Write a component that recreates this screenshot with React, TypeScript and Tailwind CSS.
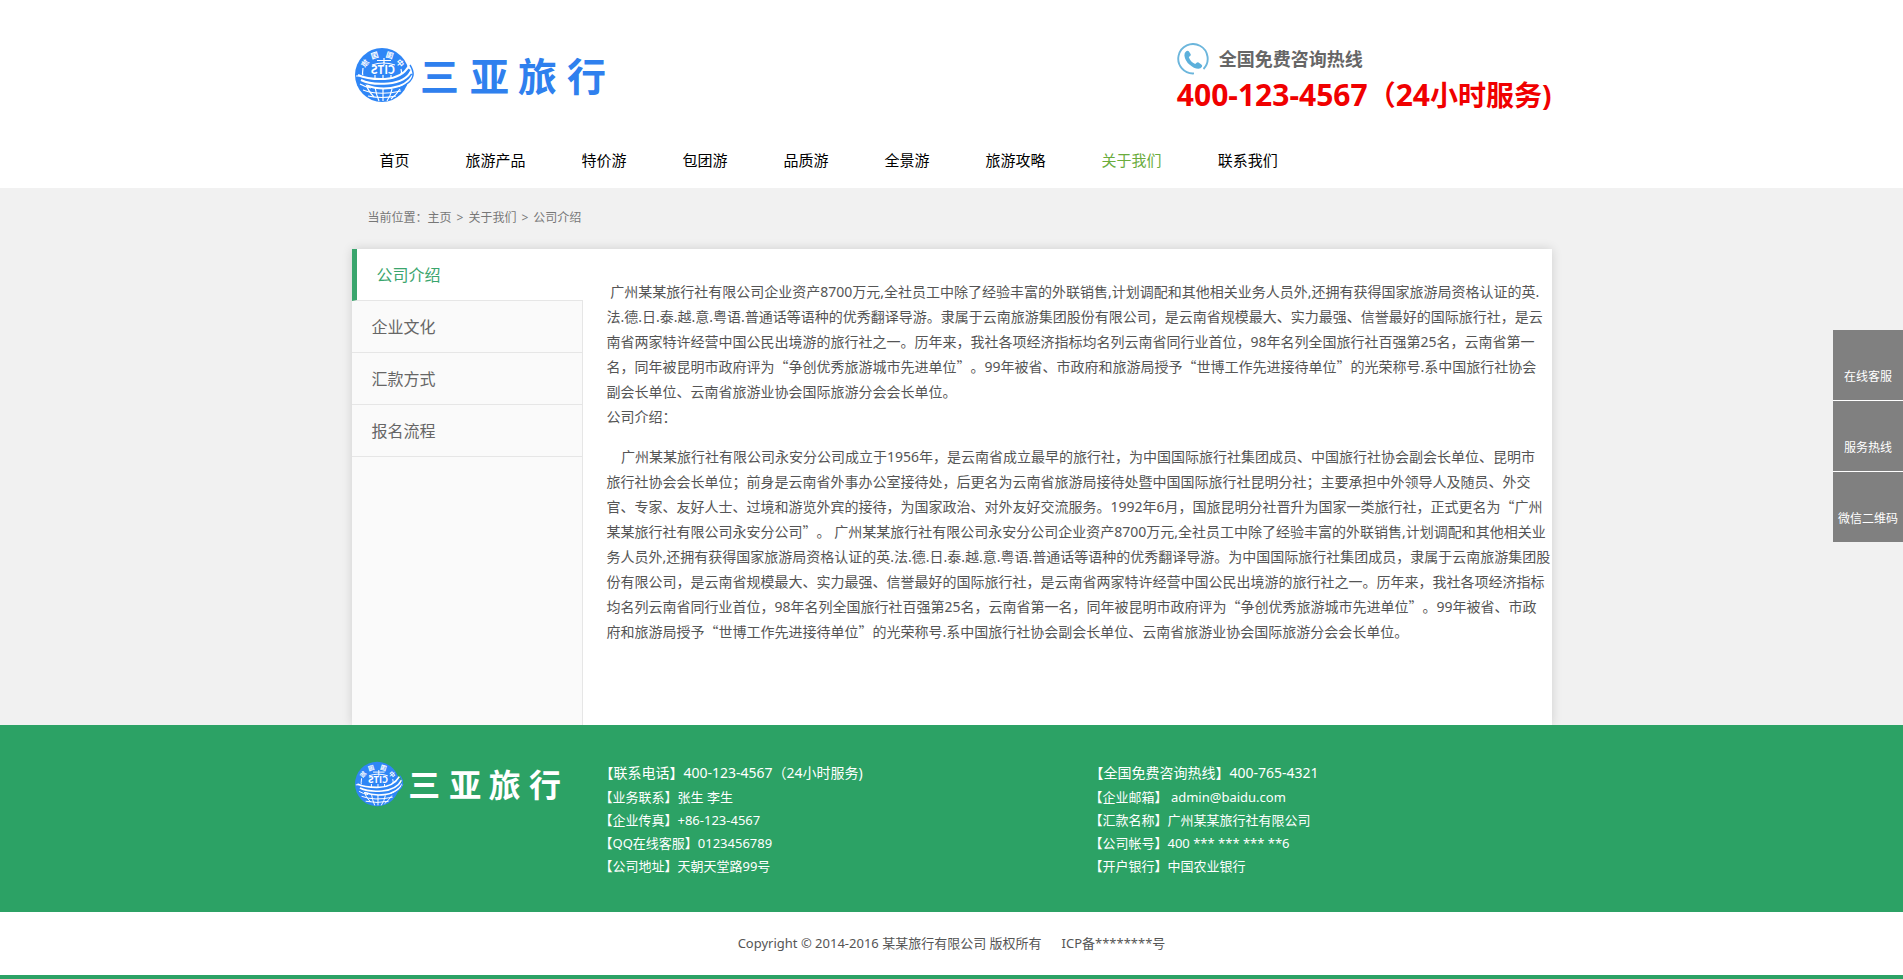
import React from "react";

const navItems = ["首页", "旅游产品", "特价游", "包团游", "品质游", "全景游", "旅游攻略", "关于我们", "联系我们"];
const sideItems = ["公司介绍", "企业文化", "汇款方式", "报名流程"];
const floatItems = ["在线客服", "服务热线", "微信二维码"];

const contactLeft = [
  "【联系电话】400-123-4567（24小时服务)",
  "【业务联系】张生 李生",
  "【企业传真】+86-123-4567",
  "【QQ在线客服】0123456789",
  "【公司地址】天朝天堂路99号",
];
const contactRight = [
  "【全国免费咨询热线】400-765-4321",
  "【企业邮箱】 admin@baidu.com",
  "【汇款名称】广州某某旅行社有限公司",
  "【公司帐号】400 *** *** *** **6",
  "【开户银行】中国农业银行",
];

const intro = [
  "\u00a0广州某某旅行社有限公司企业资产8700万元,全社员工中除了经验丰富的外联销售,计划调配和其他相关业务人员外,还拥有获得国家旅游局资格认证的英.",
  "法.德.日.泰.越.意.粤语.普通话等语种的优秀翻译导游。隶属于云南旅游集团股份有限公司，是云南省规模最大、实力最强、信誉最好的国际旅行社，是云",
  "南省两家特许经营中国公民出境游的旅行社之一。历年来，我社各项经济指标均名列云南省同行业首位，98年名列全国旅行社百强第25名，云南省第一",
  "名，同年被昆明市政府评为“争创优秀旅游城市先进单位”。99年被省、市政府和旅游局授予“世博工作先进接待单位”的光荣称号.系中国旅行社协会",
  "副会长单位、云南省旅游业协会国际旅游分会会长单位。",
  "公司介绍：",
];
const history = [
  "\u00a0\u00a0\u00a0\u00a0广州某某旅行社有限公司永安分公司成立于1956年，是云南省成立最早的旅行社，为中国国际旅行社集团成员、中国旅行社协会副会长单位、昆明市",
  "旅行社协会会长单位；前身是云南省外事办公室接待处，后更名为云南省旅游局接待处暨中国国际旅行社昆明分社；主要承担中外领导人及随员、外交",
  "官、专家、友好人士、过境和游览外宾的接待，为国家政治、对外友好交流服务。1992年6月，国旅昆明分社晋升为国家一类旅行社，正式更名为“广州",
  "某某旅行社有限公司永安分公司”。 广州某某旅行社有限公司永安分公司企业资产8700万元,全社员工中除了经验丰富的外联销售,计划调配和其他相关业",
  "务人员外,还拥有获得国家旅游局资格认证的英.法.德.日.泰.越.意.粤语.普通话等语种的优秀翻译导游。为中国国际旅行社集团成员，隶属于云南旅游集团股",
  "份有限公司，是云南省规模最大、实力最强、信誉最好的国际旅行社，是云南省两家特许经营中国公民出境游的旅行社之一。历年来，我社各项经济指标",
  "均名列云南省同行业首位，98年名列全国旅行社百强第25名，云南省第一名，同年被昆明市政府评为“争创优秀旅游城市先进单位”。99年被省、市政",
  "府和旅游局授予“世博工作先进接待单位”的光荣称号.系中国旅行社协会副会长单位、云南省旅游业协会国际旅游分会会长单位。",
];

/* Curly quotes take the full-width form of the Chinese font. */
function Prose({ lines }: { lines: string[] }) {
  return (
    <p>
      {lines.map((line) => (
        <span key={line} className="block">
          {line.split(/([“”])/).map((part, i) =>
            part === "“" || part === "”" ? (
              <span key={i} className="font-['Noto_Sans_CJK_SC',sans-serif]">
                {part}
              </span>
            ) : (
              part
            ),
          )}
        </span>
      ))}
    </p>
  );
}

function Logo({ className, textClass }: { className: string; textClass: string }) {
  return (
    <svg viewBox="0 0 256 56" className={className} role="img" aria-label="三亚旅行">
      <circle cx="27" cy="28" r="27" fill="#2f86f6" />
      <g fill="none" stroke="#fff" strokeWidth="1.2">
        <path d="M5 37Q10 40 16 41M8 43Q24 49 46 44M13 49Q27 52 41 49" />
        <path d="M11 37Q13 44 19 50M20 40Q21 47 24 54M28 41V54M37 42Q36 48 32 54M45 42Q42 47 36 52" />
        <path d="M22 13.5H36M29 11V18M17 18Q28 14 40 18" />
        <path d="M1 29H8M8 21Q7 27 8 31M46 22Q47 25 46 28M20 28V33M28 28V33M36 28V33" />
      </g>
      <g fill="none">
        <path d="M5 29Q14 34 30 34Q48 32 54 22M8 34Q17 39 33 38.500Q51 37 57 27" stroke="#2f86f6" strokeWidth="4" />
        <path d="M3 28Q12 32.500 30 32Q47 31 54 19" stroke="#fff" strokeWidth="2" />
        <path d="M6 33Q16 38 33 36.500Q51 35 57 23" stroke="#fff" strokeWidth="2" />
        <path d="M12 38.500Q22 42.500 36 41Q52 39 58 28" stroke="#fff" strokeWidth="2" />
        <path d="M55 18Q62 29 53 36Q48 40 42 42" stroke="#2f86f6" strokeWidth="1.4" />
      </g>
      <g fill="#fff" fontSize="7.500" fontWeight="700" textAnchor="middle" fontFamily="'Noto Sans CJK SC', sans-serif">
        <text transform="translate(12 18) rotate(-50) scale(-1 1)">旅</text>
        <text transform="translate(20.500 11) rotate(-17) scale(-1 1)">国</text>
        <text transform="translate(34 11) rotate(17) scale(-1 1)">国</text>
        <text transform="translate(43 18) rotate(50) scale(-1 1)">中</text>
        <text transform="translate(28 27) scale(-1 1)" fontSize="11">
          CITS
        </text>
      </g>
      <text
        x="65 115 163 212"
        y="44"
        fontSize="39"
        fontWeight="700"
        fontFamily="'Noto Sans CJK SC', sans-serif"
        className={textClass}
      >
        三亚旅行
      </text>
    </svg>
  );
}

function PhoneIcon() {
  return (
    <svg viewBox="0 0 32 32" className="size-8" aria-hidden="true">
      <path d="M17 30.400A14.700 14.700 0 1 1 26.500 26" fill="none" stroke="#6cb6dc" strokeWidth="1.9" />
      <path
        d="M9.200 8.300Q7.200 9.600 7.400 12.400Q8 17.500 12.400 21.600Q17 25.800 21.400 25.800Q23.800 25.700 25 23.800Q25.600 22.700 24.600 21.800L21.600 19.500Q20.600 18.800 19.600 19.700L18.200 21Q13.300 18.700 11.800 13.900L13.200 12.900Q14.200 12 13.600 10.900L11.800 8.300Q10.700 7.200 9.200 8.300Z"
        fill="#5cb0db"
      />
    </svg>
  );
}

function ContactList({ rows }: { rows: string[] }) {
  return (
    <ul className="text-[13px] leading-[23px] text-white">
      {rows.map((row, i) => (
        <li key={row} className={i === 0 ? "pb-px text-sm leading-[25px]" : ""}>
          {row}
        </li>
      ))}
    </ul>
  );
}

export default function App() {
  return (
    <div className="bg-white font-['Noto_Sans','Noto_Sans_CJK_SC',sans-serif] text-sm text-[#555] [text-spacing-trim:space-all]">
      <header>
        <div className="mx-auto max-w-[1200px]">
          <div className="flex h-[132px] items-start justify-between">
            <a href="#" className="mt-[47px] ml-[3px] block">
              <Logo className="h-14 w-64" textClass="fill-[#2f80ee]" />
            </a>
            <div className="mt-[43px]">
              <div className="flex items-center gap-[10px] text-lg leading-8 font-bold text-[#666]">
                <PhoneIcon />
                全国免费咨询热线
              </div>
              <p className="text-[28px] leading-10 font-bold text-[#f00000]">
                <span className="text-[30px]">400-123-4567</span>（<span className="text-[30px]">24</span>小时服务)
              </p>
            </div>
          </div>
          <nav>
            <ul className="flex h-14 items-center text-[15px]">
              {navItems.map((item) => (
                <li key={item}>
                  <a
                    href="#"
                    className={item === "关于我们" ? "block px-7 leading-[56px] text-[#6aac3c]" : "block px-7 leading-[56px] text-black"}
                  >
                    {item}
                  </a>
                </li>
              ))}
            </ul>
          </nav>
        </div>
      </header>

      <main className="overflow-hidden bg-[#f1f1f1]">
        <div className="mx-auto max-w-[1200px]">
          <div className="flex h-[61px] items-center gap-[5px] pb-0.5 pl-4 text-xs text-[#777]">
            <span>
              当前位置：<a href="#">主页</a>
            </span>
            <span>&gt;</span>
            <a href="#">关于我们</a>
            <span>&gt;</span>
            <a href="#">公司介绍</a>
          </div>
          <div className="flex bg-white shadow-[0_0_10px_rgba(0,0,0,0.14)]">
            <aside className="flex w-[231px] shrink-0 flex-col text-base">
              {sideItems.map((item, i) => (
                <a
                  key={item}
                  href="#"
                  className={
                    i === 0
                      ? "block border-b border-l-5 border-b-[#e6e6e6] border-l-[#3aa56d] pt-0.5 pl-5 leading-[49px] text-[#3aa56d]"
                      : "block border-r border-b border-[#e6e6e6] bg-[#fafafa] pt-0.5 pl-5 leading-[49px] text-[#666]"
                  }
                >
                  {item}
                </a>
              ))}
              <div className="grow border-r border-[#e6e6e6] bg-[#fafafa]" />
            </aside>
            <article className="flex grow flex-col gap-[15px] pt-[30px] pb-[81px] pl-6 leading-[25px]">
              <Prose lines={intro} />
              <Prose lines={history} />
            </article>
          </div>
        </div>
      </main>

      <footer>
        <div className="bg-[#2ca265]">
          <div className="mx-auto flex h-[187px] max-w-[1200px] items-start">
            <a href="#" className="mt-9 ml-[3px] block w-[245px] shrink-0">
              <Logo className="h-[46px] w-[210px]" textClass="fill-white" />
            </a>
            <div className="mt-[35px] grid grow grid-cols-[490px_1fr]">
              <ContactList rows={contactLeft} />
              <ContactList rows={contactRight} />
            </div>
          </div>
        </div>
        <p className="flex h-[67px] items-center justify-center gap-5 border-b-4 border-[#2ca265] text-[13px]">
          <span>Copyright © 2014-2016 某某旅行有限公司 版权所有</span>
          <span>ICP备********号</span>
        </p>
      </footer>

      <aside className="fixed top-[330px] right-0 flex w-[70px] flex-col gap-px bg-white">
        {floatItems.map((item) => (
          <a key={item} href="#" className="block h-[70px] bg-[#808080] pt-[35px] text-center text-xs leading-6 text-white">
            {item}
          </a>
        ))}
      </aside>
    </div>
  );
}
